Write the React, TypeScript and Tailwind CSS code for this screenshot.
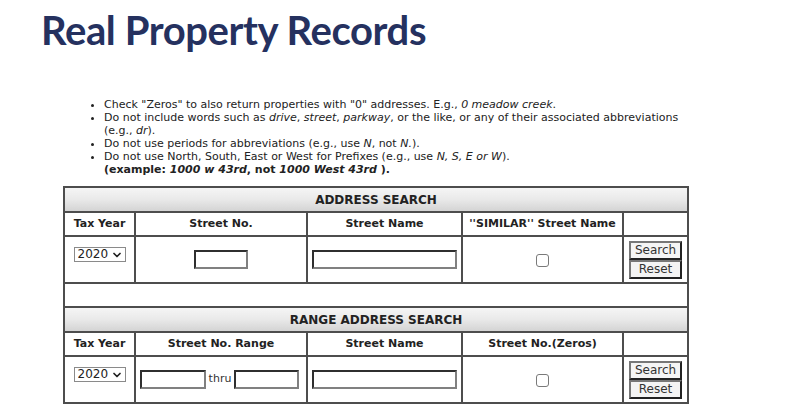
import { ChevronDown } from "lucide-react";

const cell = "border-2 border-[#4d4d4d] text-center align-middle";
const head =
  "border-2 border-[#4d4d4d] h-[25px] bg-gradient-to-b from-[#f5f5f5] via-[#e9e9e9] to-[#d4d4d4] text-center text-[12px] font-bold text-[#222]";
const colHead = "border-2 border-[#4d4d4d] h-[24px] text-center text-[11px] font-bold text-[#222]";
const textBox =
  "h-[19px] border-2 border-[#2f2f2f] border-r-[#808080] border-b-[#808080] bg-white outline-none";

const YearSelect = () => (
  <div className="relative h-[15px] w-[52px]">
    <select
      defaultValue="2020"
      className="block h-[15px] w-[52px] appearance-none border border-[#8a8a8a] bg-white pl-[3px] text-[12px] leading-[13px] text-[#222] outline-none"
    >
      <option>2020</option>
      <option>2019</option>
      <option>2018</option>
    </select>
    <ChevronDown
      size={12}
      strokeWidth={3.5}
      className="pointer-events-none absolute right-[3px] top-[2px] text-[#222]"
    />
  </div>
);

const Check = () => (
  <input
    type="checkbox"
    className="h-[13px] w-[13px] appearance-none rounded-[3px] border border-[#7a7a7a] bg-white align-middle"
  />
);

const Buttons = () => (
  <div className="flex flex-col items-center">
    <button className="h-[19px] w-[53px] border-2 border-[#777] border-r-[#222] border-b-[#222] bg-[#f4f4f4] text-[12px] leading-none text-[#333]">
      Search
    </button>
    <button className="h-[19px] w-[53px] border-2 border-[#777] border-r-[#222] border-b-[#222] bg-[#f4f4f4] text-[12px] leading-none text-[#333]">
      Reset
    </button>
  </div>
);

export default function App() {
  return (
    <div className="min-h-[414px] w-[808px] bg-white font-['DejaVu_Sans',Verdana,sans-serif] text-[#222]">
      <h1 className="pl-[41px] pt-[5px] font-['Lato',sans-serif] text-[40px] font-bold leading-[50px] tracking-[-0.4px] text-[#25315f]">
        Real Property Records
      </h1>

      <ul className="ml-[104px] mt-[43px] w-[582px] list-disc text-[11px] leading-[13px] text-[#222]">
        <li>
          Check "Zeros" to also return properties with "0" addresses. E.g., <i>0 meadow creek</i>.
        </li>
        <li>
          Do not include words such as <i>drive</i>, <i>street</i>, <i>parkway</i>, or the like, or any of
          their associated abbreviations (e.g., <i>dr</i>).
        </li>
        <li>
          Do not use periods for abbreviations (e.g., use <i>N</i>, not <i>N.</i>).
        </li>
        <li>
          Do not use North, South, East or West for Prefixes (e.g., use <i>N, S, E or W</i>).
        </li>
      </ul>
      <p className="ml-[104px] text-[11px] font-bold leading-[13px]">
        (example: <i>1000 w 43rd</i>, not <i>1000 West 43rd</i> ).
      </p>

      <table className="ml-[63px] mt-[10px] w-[624px] table-fixed border-collapse">
        <colgroup>
          <col className="w-[71px]" />
          <col className="w-[172px]" />
          <col className="w-[155px]" />
          <col className="w-[161px]" />
          <col className="w-[65px]" />
        </colgroup>
        <tbody>
          <tr>
            <td colSpan={5} className={head}>
              ADDRESS SEARCH
            </td>
          </tr>
          <tr>
            <td className={colHead}>Tax Year</td>
            <td className={colHead}>Street No.</td>
            <td className={colHead}>Street Name</td>
            <td className={colHead}>''SIMILAR'' Street Name</td>
            <td className={colHead}></td>
          </tr>
          <tr className="h-[47px]">
            <td className={`${cell} align-top`}>
              <div className="flex justify-center pt-[10px]">
                <YearSelect />
              </div>
            </td>
            <td className={cell}>
              <input type="text" className={`${textBox} w-[54px]`} />
            </td>
            <td className={cell}>
              <input type="text" className={`${textBox} w-[145px]`} />
            </td>
            <td className={cell}>
              <Check />
            </td>
            <td className={cell}>
              <Buttons />
            </td>
          </tr>
          <tr className="h-[24px]">
            <td colSpan={5} className="border-2 border-[#4d4d4d]"></td>
          </tr>
          <tr>
            <td colSpan={5} className={head}>
              RANGE ADDRESS SEARCH
            </td>
          </tr>
          <tr>
            <td className={colHead}>Tax Year</td>
            <td className={colHead}>Street No. Range</td>
            <td className={colHead}>Street Name</td>
            <td className={colHead}>Street No.(Zeros)</td>
            <td className={colHead}></td>
          </tr>
          <tr className="h-[47px]">
            <td className={`${cell} align-top`}>
              <div className="flex justify-center pt-[10px]">
                <YearSelect />
              </div>
            </td>
            <td className={cell}>
              <div className="flex items-center justify-center gap-[3px] pr-[3px] text-[11px] text-[#333]">
                <input type="text" className={`${textBox} w-[66px]`} />
                thru
                <input type="text" className={`${textBox} w-[65px]`} />
              </div>
            </td>
            <td className={cell}>
              <input type="text" className={`${textBox} w-[145px]`} />
            </td>
            <td className={cell}>
              <Check />
            </td>
            <td className={cell}>
              <Buttons />
            </td>
          </tr>
        </tbody>
      </table>
    </div>
  );
}
